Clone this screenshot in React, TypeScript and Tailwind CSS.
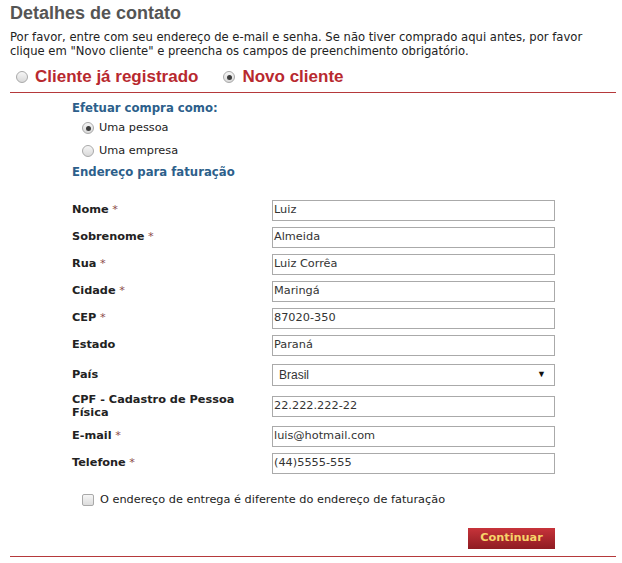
import React from 'react'

const Radio = ({ checked }: { checked?: boolean }) => (
  <span className="flex h-[12px] w-[12px] shrink-0 items-center justify-center rounded-full border border-[#a9a9a9] bg-gradient-to-b from-[#f6f6f6] to-[#d9d9d9]">
    {checked && <span className="h-[5px] w-[5px] rounded-full bg-[#3c3c3c]" />}
  </span>
)

const fields = [
  { label: 'Nome', req: true, value: 'Luiz' },
  { label: 'Sobrenome', req: true, value: 'Almeida' },
  { label: 'Rua', req: true, value: 'Luiz Corrêa' },
  { label: 'Cidade', req: true, value: 'Maringá' },
  { label: 'CEP', req: true, value: '87020-350' },
  { label: 'Estado', req: false, value: 'Paraná' },
]

const Row = ({ label, req, value }: { label: string; req?: boolean; value: string }) => (
  <div className="flex h-[27px] items-center">
    <div className="w-[200px] font-bold text-[#222]">
      {label}
      {req && <span className="font-normal text-[#8b4a4a]"> *</span>}
    </div>
    <div className="flex h-[21px] w-[283px] items-center border border-[#aaa] px-[1px] text-[#333]">
      {value}
    </div>
  </div>
)

const App = () => {
  return (
    <div className="h-[563px] w-[622px] overflow-hidden bg-white font-['DejaVu_Sans',sans-serif] text-[11.3px] text-[#222]">
      <div className="pl-[10px] pr-[6px]">
        <h1 className="pt-[3px] font-['Liberation_Sans',sans-serif] text-[18px] leading-[20px] font-bold text-[#555]">
          Detalhes de contato
        </h1>
        <p className="mt-[7px] text-[11.6px] leading-[14px] text-[#222]">
          Por favor, entre com seu endereço de e-mail e senha. Se não tiver comprado aqui antes, por favor
          <br />
          clique em "Novo cliente" e preencha os campos de preenchimento obrigatório.
        </p>
        <div className="mt-[9px] flex h-[20px] items-center pl-[6px] font-['Liberation_Sans',sans-serif] text-[17px] font-bold text-[#b8292f]">
          <Radio />
          <span className="ml-[7px]">Cliente já registrado</span>
          <span className="ml-[25px]">
            <Radio checked />
          </span>
          <span className="ml-[7px]">Novo cliente</span>
        </div>
        <div className="mt-[5px] border-t border-[#b5393b]" />

        <div className="pl-[62px]">
          <h2 className="mt-[7px] text-[11.7px] leading-[16px] font-bold text-[#2d5f8b]">Efetuar compra como:</h2>
          <div className="mt-[4px] flex h-[16px] items-center pl-[10px]">
            <Radio checked />
            <span className="ml-[5px]">Uma pessoa</span>
          </div>
          <div className="mt-[7px] flex h-[16px] items-center pl-[10px]">
            <Radio />
            <span className="ml-[5px]">Uma empresa</span>
          </div>
          <h2 className="mt-[5px] text-[11.7px] leading-[16px] font-bold text-[#2d5f8b]">Endereço para faturação</h2>

          <div className="mt-[17px]">
            {fields.map((f) => (
              <Row key={f.label} label={f.label} req={f.req} value={f.value} />
            ))}
            <div className="mt-[5px] flex h-[22px] items-center">
              <div className="w-[200px] font-bold text-[#222]">País</div>
              <div className="flex h-[22px] w-[283px] items-center justify-between border border-[#aaa] pr-[8px] pl-[6px] font-['Liberation_Sans',sans-serif] text-[12px] text-[#333]">
                <span>Brasil</span>
                <span className="text-[9px] text-[#111]">▼</span>
              </div>
            </div>
            <div className="mt-[6px] flex h-[28px] items-center">
              <div className="w-[200px] leading-[13px] font-bold text-[#222]">
                CPF - Cadastro de Pessoa
                <br />
                Física
              </div>
              <div className="flex h-[21px] w-[283px] items-center border border-[#aaa] px-[1px] text-[#333]">
                22.222.222-22
              </div>
            </div>
            <div className="mt-[3px]">
              <Row label="E-mail" req value="luis@hotmail.com" />
              <Row label="Telefone" req value="(44)5555-555" />
            </div>
          </div>

          <div className="mt-[15px] flex h-[16px] items-center pl-[10px]">
            <span className="h-[12px] w-[12px] rounded-[2px] border border-[#a9a9a9] bg-gradient-to-b from-[#f6f6f6] to-[#dcdcdc]" />
            <span className="ml-[6px]">O endereço de entrega é diferente do endereço de faturação</span>
          </div>

          <div className="mt-[20px] flex w-[483px] justify-end">
            <button className="flex h-[21px] w-[87px] items-center justify-center bg-gradient-to-b from-[#c7333a] to-[#8f1c22] font-bold text-[#f7d36a]">
              Continuar
            </button>
          </div>
        </div>
        <div className="mt-[7px] border-t border-[#b5393b]" />
      </div>
    </div>
  )
}

export default App
